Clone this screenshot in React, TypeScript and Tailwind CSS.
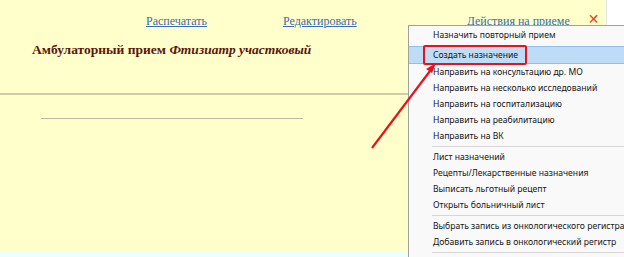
import React from "react";

const menuGroups: string[][] = [
  [
    "Назначить повторный прием",
    "Создать назначение",
    "Направить на консультацию др. МО",
    "Направить на несколько исследований",
    "Направить на госпитализацию",
    "Направить на реабилитацию",
    "Направить на ВК",
  ],
  [
    "Лист назначений",
    "Рецепты/Лекарственные назначения",
    "Выписать льготный рецепт",
    "Открыть больничный лист",
  ],
  [
    "Выбрать запись из онкологического регистра",
    "Добавить запись в онкологический регистр",
  ],
];

function ContextMenu() {
  return (
    <div className="absolute left-[408px] top-[25px] w-[216px] h-[240px] bg-[#f9f9f9] border border-r-0 border-[#a0a0a0] pt-[1px] font-['Noto_Sans',sans-serif] text-[8.6px] text-[#161616] whitespace-nowrap">
      {menuGroups.map((group, gi) => (
        <div key={gi}>
          {gi > 0 && (
            <div className="h-[5px] flex items-center pl-[23px]">
              <div className="h-px w-full bg-[#d7d7d7]" />
            </div>
          )}
          {group.map((item) =>
            item === "Создать назначение" ? (
              <div
                key={item}
                className="relative mt-[3px] h-[18px] flex items-center pl-[24px] bg-[#bfdcf6] border-y border-[#8fc0ec]"
              >
                {item}
                <span className="absolute left-[14px] top-[-2px] w-[104px] h-[20px] border-2 border-[#e3141e] rounded-[2px]" />
              </div>
            ) : (
              <div key={item} className="h-[16px] flex items-center pl-[24px]">
                {item}
              </div>
            )
          )}
        </div>
      ))}
      <div className="h-[5px] flex items-center pl-[23px]">
        <div className="h-px w-full bg-[#d7d7d7]" />
      </div>
    </div>
  );
}

export default function App() {
  return (
    <div className="relative w-[624px] h-[257px] overflow-hidden bg-white">
      <div className="flex h-[252px]">
        <div className="w-[607px] bg-[#ffffcc] border-r border-[#e6e6e6] font-['Liberation_Serif',serif]">
          {/* top links */}
          <div className="flex items-center h-[36px] pt-[6px] text-[12px] text-[#3a6db5] whitespace-nowrap">
            <a className="ml-[146px] underline">Распечатать</a>
            <a className="ml-[76px] underline">Редактировать</a>
            <a className="ml-[110px] underline">Действия на приеме</a>
            <span className="ml-[18px] -mt-[4px] text-[14px] text-[#e0461e] font-['DejaVu_Sans',sans-serif]">✕</span>
          </div>
          <div className="pl-[32px] pt-[5px] text-[13.5px] font-bold text-[#5e1409] leading-[18px] whitespace-nowrap">
            Амбулаторный прием <i>Фтизиатр участковый</i>
          </div>
          <div className="mt-[34px] h-[2px] bg-[#cfcba6]" />
          <div className="ml-[41px] mt-[23px] w-[262px] h-px bg-[#bdb9a0]" />
        </div>
      </div>
      <div className="h-[5px] bg-[#ecffff]" />

      <ContextMenu />

      <svg className="absolute left-0 top-0 pointer-events-none" width="624" height="257">
        <line x1="372" y1="148" x2="430" y2="71" stroke="#e8141c" strokeWidth="2.2" />
        <polygon points="436,63 426,69 432,73" fill="#e8141c" />
      </svg>
    </div>
  );
}
